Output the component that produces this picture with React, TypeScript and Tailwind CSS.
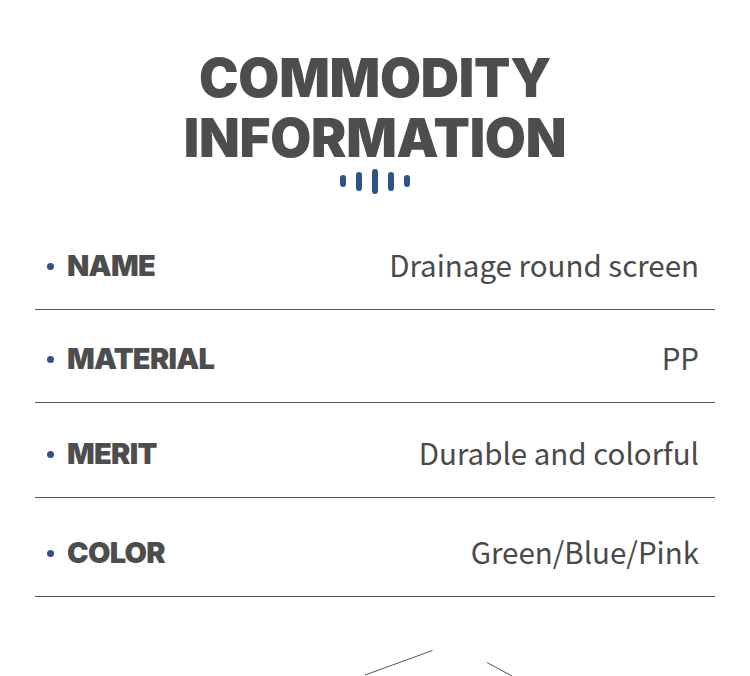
import React from "react";

const rows = [
  { label: "NAME", value: "Drainage round screen", h: "h-[116px]" },
  { label: "MATERIAL", value: "PP", h: "h-[93px]" },
  { label: "MERIT", value: "Durable and colorful", h: "h-[95px]" },
  { label: "COLOR", value: "Green/Blue/Pink", h: "h-[99px]" },
];

export default function App() {
  return (
    <div className="w-[750px] h-[676px] bg-white overflow-hidden flex flex-col">
      <div className="flex flex-col items-center pt-[48px]">
        <div
          className="text-[53px] leading-[60px] font-black text-[#4d4d4d] tracking-[-0.005em] text-center"
          style={{ fontFamily: "Inter, sans-serif" }}
        >
          <div>COMMODITY</div>
          <div>INFORMATION</div>
        </div>
        <div className="flex items-center gap-[10px] h-[26px]">
          <span className="w-[6px] h-[12px] rounded-full bg-[#2c5487]" />
          <span className="w-[6px] h-[19px] rounded-full bg-[#2c5487]" />
          <span className="w-[6px] h-[25px] rounded-full bg-[#2c5487]" />
          <span className="w-[6px] h-[19px] rounded-full bg-[#2c5487]" />
          <span className="w-[6px] h-[12px] rounded-full bg-[#2c5487]" />
        </div>
      </div>
      <div className="mx-[35px] flex flex-col">
        {rows.map((r) => (
          <div
            key={r.label}
            className={`flex items-end border-b border-[#555555] pb-[28px] ${r.h}`}
          >
            <div className="h-[30px] w-full flex items-center justify-between">
              <div className="flex items-center">
                <span className="w-[7px] h-[7px] rounded-full bg-[#2c5487] ml-[12px] mr-[13px]" />
                <span
                  className="text-[29px] leading-[30px] font-black text-[#4d4d4d] tracking-[-0.025em]"
                  style={{ fontFamily: "Inter, sans-serif" }}
                >
                  {r.label}
                </span>
              </div>
              <span
                className="text-[29.5px] leading-[30px] pb-[4px] text-[#4a4a4a] mr-[16px]"
                style={{ fontFamily: '"Noto Sans CJK SC", "Noto Sans", sans-serif' }}
              >
                {r.value}
              </span>
            </div>
          </div>
        ))}
      </div>
      <div className="flex-1 relative">
        <svg width="750" height="30" className="absolute left-0 bottom-0">
          <line x1="365" y1="29" x2="432.5" y2="4.5" stroke="#555" strokeWidth="1" />
          <line x1="487" y1="16.5" x2="512" y2="30" stroke="#555" strokeWidth="1" />
        </svg>
      </div>
    </div>
  );
}
